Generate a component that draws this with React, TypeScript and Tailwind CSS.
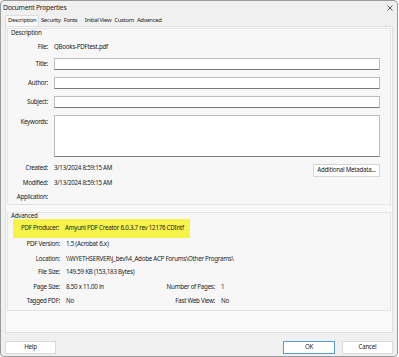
import React from "react";

const font = { fontFamily: '"Noto Sans", "Open Sans", sans-serif' };

const Input = ({ h = "h-[12px]" }: { h?: string }) => (
  <div className={`flex-1 ${h} bg-white border border-[#bdbdbd] border-b-[#7a7a7a]`} />
);

const Row = ({ label, children, cls = "" }: { label: string; children?: React.ReactNode; cls?: string }) => (
  <div className={`flex items-center ${cls}`}>
    <span className="w-[40px] text-right shrink-0">{label}</span>
    <div className="ml-[6px] flex-1 flex items-center">{children}</div>
  </div>
);

const AdvRow = ({ label, value, label2, value2, cls = "" }: { label: string; value: string; label2?: string; value2?: string; cls?: string }) => (
  <div className={`flex items-center h-[10px] ${cls}`}>
    <span className="w-[52px] text-right shrink-0">{label}</span>
    <span className="ml-[6px] w-[95px] shrink-0 whitespace-nowrap">{value}</span>
    {label2 && <span className="w-[54px] text-right shrink-0 whitespace-nowrap">{label2}</span>}
    {value2 && <span className="ml-[6px]">{value2}</span>}
  </div>
);

export default function App() {
  const tabs = ["Description", "Security", "Fonts", "Initial View", "Custom", "Advanced"];
  return (
    <div className="w-[399px] h-[357px] bg-white text-[6.2px] tracking-[-0.25px] leading-none text-[#1b1b1b]" style={font}>
      <div className="w-[398px] h-[357px] bg-[#f0f0f0] border border-[#9a9a9a] rounded-[4px] flex flex-col overflow-hidden">
        {/* title bar */}
        <div className="h-[14px] flex items-center justify-between pl-[2px] pr-[4px]">
          <span className="text-[6.8px]">Document Properties</span>
          <svg width="6" height="6" viewBox="0 0 6 6">
            <path d="M0.5 0.5 L5.5 5.5 M5.5 0.5 L0.5 5.5" stroke="#333" strokeWidth="0.8" />
          </svg>
        </div>
        {/* tabs */}
        <div className="h-[11px] flex items-end pl-[4px] text-[5.9px] tracking-[-0.3px]">
          {tabs.map((t, i) => (
            <div
              key={t}
              className={
                i === 0
                  ? "h-[11px] px-[2px] flex items-center whitespace-nowrap bg-[#f9f9f9] border border-b-0 border-[#dcdcdc]"
                  : i === 3
                  ? "h-[10px] pl-[6px] pr-[1.5px] flex items-center whitespace-nowrap"
                  : "h-[10px] px-[1.5px] flex items-center whitespace-nowrap"
              }
            >
              {t}
            </div>
          ))}
        </div>
        {/* panel */}
        <div className="mx-[4px] h-[307px] bg-[#f9f9f9] border border-[#e0e0e0] px-[1px] pt-[1px]">
          {/* Description group */}
          <div className="h-[177px] border border-[#e4e4e4] bg-[#f7f7f7] flex flex-col pr-[10px]">
            <div className="h-[8px] pl-[3px] flex items-center">Description</div>
            <Row label="File:" cls="h-[10px] mt-[5px]">QBooks-PDFtest.pdf</Row>
            <Row label="Title:" cls="mt-[6px]"><Input /></Row>
            <Row label="Author:" cls="mt-[7px]"><Input /></Row>
            <Row label="Subject:" cls="mt-[7px]"><Input /></Row>
            <div className="flex items-start mt-[7px]">
              <span className="w-[40px] text-right shrink-0 mt-[4px]">Keywords:</span>
              <div className="ml-[6px] flex-1 flex"><Input h="h-[42px]" /></div>
            </div>
            <div className="flex">
              <div className="flex flex-col flex-1">
                <Row label="Created:" cls="h-[10px] mt-[6px]">3/13/2024 8:59:15 AM</Row>
                <Row label="Modified:" cls="h-[10px] mt-[5px]">3/13/2024 8:59:15 AM</Row>
                <Row label="Application:" cls="h-[10px] mt-[4px]" />
              </div>
              <div className="mt-[7px] h-[13px] w-[67px] bg-white border border-[#d6d6d6] flex items-center justify-center whitespace-nowrap">
                Additional Metadata...
              </div>
            </div>
          </div>
          {/* Advanced group */}
          <div className="mt-[7px] h-[99px] border border-[#e4e4e4] bg-[#f7f7f7] flex flex-col">
            <div className="h-[6px] pl-[3px] flex items-center">Advanced</div>
            <div className="ml-[5px] w-[177px] h-[19px] bg-[#f7f34b] flex items-center">
              <span className="w-[46px] text-right shrink-0">PDF Producer:</span>
              <span className="ml-[6px] whitespace-nowrap">Amyuni PDF Creator 6.0.3.7 rev 12176 CDIntf</span>
            </div>
            <AdvRow label="PDF Version:" value="1.5 (Acrobat 6.x)" cls="mt-[1px]" />
            <AdvRow label="Location:" value="\\WYETHSERVER\j_bevl\4_Adobe ACP Forums\Other Programs\" cls="mt-[5px]" />
            <AdvRow label="File Size:" value="149.59 KB (153,183 Bytes)" cls="mt-[3px]" />
            <AdvRow label="Page Size:" value="8.50 x 11.00 in" label2="Number of Pages:" value2="1" cls="mt-[5px]" />
            <AdvRow label="Tagged PDF:" value="No" label2="Fast Web View:" value2="No" cls="mt-[4px]" />
          </div>
        </div>
        {/* buttons */}
        <div className="flex items-center mt-[8px] px-[4px]">
          <div className="w-[51px] h-[13px] bg-white border border-[#dadada] flex items-center justify-center">Help</div>
          <div className="flex-1" />
          <div className="w-[52px] h-[13px] bg-white border border-[#5b9bd5] flex items-center justify-center">OK</div>
          <div className="ml-[7px] w-[51px] h-[13px] bg-white border border-[#dadada] flex items-center justify-center">Cancel</div>
        </div>
      </div>
    </div>
  );
}
